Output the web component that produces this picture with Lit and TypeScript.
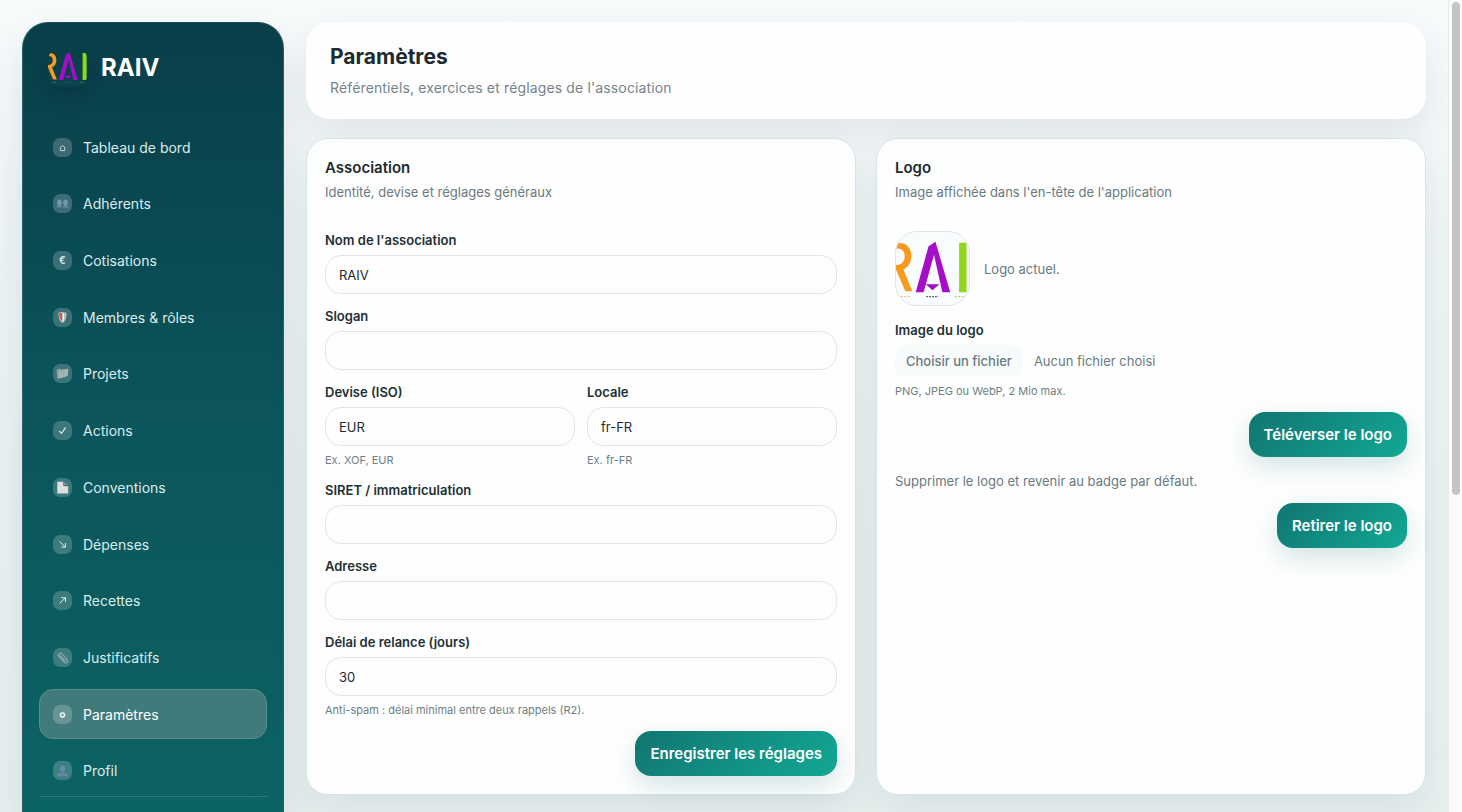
import { LitElement, html, css, svg } from "lit";
import { customElement, state } from "lit/decorators.js";
import { classMap } from "lit/directives/class-map.js";

interface NavItem {
  id: string;
  label: string;
}

const NAV: NavItem[] = [
  { id: "home", label: "Tableau de bord" },
  { id: "people", label: "Adhérents" },
  { id: "euro", label: "Cotisations" },
  { id: "shield", label: "Membres & rôles" },
  { id: "folder", label: "Projets" },
  { id: "check", label: "Actions" },
  { id: "page", label: "Conventions" },
  { id: "down", label: "Dépenses" },
  { id: "up", label: "Recettes" },
  { id: "clip", label: "Justificatifs" },
  { id: "gear", label: "Paramètres" },
  { id: "user", label: "Profil" },
];

const GLYPHS: Record<string, unknown> = {
  home: svg`<path d="M6.900 10 9.500 7.300l2.600 2.700M7.300 9.800v2.800h4.400V9.800" fill="none" stroke="#d3e0e2" stroke-width=".9"/>`,
  people: svg`<g fill="#7397b0"><ellipse cx="6.500" cy="8.500" rx="2.400" ry="3"/><ellipse cx="12.500" cy="8.500" rx="2.400" ry="3"/><path d="M3.500 13.600c0-2 1.300-2.600 3-2.600s2.800.6 2.800 2.600zM9.700 13.600c0-2 1.200-2.600 2.800-2.600s3 .6 3 2.600z" opacity=".7"/></g>`,
  shield: svg`<path d="M5.500 4.800 9.500 4v11C6.400 13.200 5.300 9.500 5.500 4.800z" fill="#d9d6d2"/><path d="M6 5.300 9.500 4.700v9.300C7 12 6 9 6 5.300z" fill="#cf5b4f"/><path d="M9.500 4l4 .8c.2 4.700-.9 8.400-4 10.200z" fill="#b9bfbd"/><path d="M9.500 4.900l1.500.3v7.500l-1.500 1.300z" fill="#f0eeea"/>`,
  folder: svg`<path d="M3.600 5.600l3.600-1 1 1 7.200-1.200-.8 7.400-8.300 2.800H4.200z" fill="#8fa3a6"/><path d="M5.700 7.200l9.700-1.800-.9 6.500-8.300 2.700z" fill="#a9b6b7"/><path d="M8.400 6.700l-.3 7.200M11 6.300l-.3 6.700" stroke="#8c9da0" stroke-width=".6"/>`,
  check: svg`<path d="M6.200 9.900l2.300 2.500 4.200-6" fill="none" stroke="#e4eeee" stroke-width="1.100"/>`,
  page: svg`<path d="M4.300 3.700h5.900v4.200h5v7.700H4.300z" fill="#dde0de"/><path d="M10.900 3.900l4 3.400h-4z" fill="#8e9a9a"/><path d="M11.200 7.700h3.500" stroke="#475c5e" stroke-width=".8"/>`,
  down: svg`<path d="M6.500 6.500l5.700 5.500M12.400 8v4.200H8.200" fill="none" stroke="#dce9e9" stroke-width="1"/>`,
  up: svg`<path d="M6.600 12.500l5.700-5.600M8.200 6.700h4.300v4.300" fill="none" stroke="#dce9e9" stroke-width="1"/>`,
  clip: svg`<path d="M4.200 6.500l6.900 7.600c1.900 2 4.700-.3 3-2.400L8.600 5.500C7.200 4 5.200 5.700 6.500 7.300l5.300 5.900" fill="none" stroke="#93a8ac" stroke-width="1.100"/><path d="M5 4.700l9.300 9.600" stroke="#7b949a" stroke-width=".8"/>`,
  gear: svg`<circle cx="9.500" cy="10" r="2" fill="none" stroke="#f3f8f7" stroke-width="1.300"/><circle cx="9.500" cy="10" r="2.900" fill="none" stroke="#d7e3e1" stroke-width=".5" stroke-dasharray="1 1.200"/>`,
  user: svg`<ellipse cx="9.500" cy="7.700" rx="2.500" ry="3.300" fill="#648ba6"/><path d="M3.900 15.300c0-3 2.300-3.900 5.600-3.900s5.600.9 5.600 3.900z" fill="#67859f"/>`,
};

/* Association mark: orange R cut by the left edge, purple A, green I. */
const mark = () => svg`
  <path d="M0 11.500C8 9.500 15.500 14 15.500 24c0 7-3 11.500-8 14L16.500 60H9.500L0 38v-4.500c5.500 0 8.800-3.700 8.800-9 0-5.500-3.800-8.500-8.800-7.500z" fill="#f79a1e"/>
  <path d="M20 61 33 14.500 40 10 55 61H47L38.500 23 28 61z" fill="#a60dc9"/>
  <path d="M30 53h14l-7 6z" fill="#9a12bd"/>
  <path d="M64 11h7.500v50H64z" fill="#8fd61c"/>
  <path d="M5 65.500h10.500" stroke="#e8b35c" stroke-width="1" stroke-dasharray="2 1.500"/>
  <path d="M30.500 65.500h12.500" stroke="#6b6475" stroke-width="1.100" stroke-dasharray="2 1"/>
  <path d="M59.500 65.500h10.500" stroke="#9ccc4a" stroke-width="1" stroke-dasharray="2 1.500"/>`;

@customElement("raiv-sidebar")
class RaivSidebar extends LitElement {
  @state() private current = "gear";

  static styles = css`
    :host {
      display: flex;
      flex-direction: column;
      box-sizing: border-box;
      padding: 23px 16px 0;
      border: 1px solid #2c6168;
      border-bottom: 0;
      border-top-color: #1d4c56;
      border-radius: 26px 26px 0 0;
      background: linear-gradient(180deg, #0a3e49 0%, #0b555b 50%, #0c6363 100%);
      box-shadow: 0 18px 40px rgba(20, 60, 70, 0.1);
      color: #dcecec;
    }
    .brand {
      display: flex;
      align-items: center;
      gap: 13px;
      padding: 0 9px;
      height: 42px;
      margin-bottom: 34px;
      color: #fff;
      font-size: 24px;
      font-weight: 700;
    }
    .logo {
      width: 40px;
      height: 40px;
      border-radius: 14px;
      box-shadow: 0 10px 20px rgba(0, 20, 30, 0.22);
    }
    nav {
      flex: 1;
      display: flex;
      flex-direction: column;
      justify-content: space-between;
    }
    .item {
      display: flex;
      align-items: center;
      gap: 11px;
      box-sizing: border-box;
      height: 50px;
      padding: 0 13px;
      border: 1px solid transparent;
      border-radius: 14px;
      color: inherit;
      font-size: 14px;
      text-decoration: none;
    }
    .active {
      background: #417a7a;
      border-color: #5c8e8c;
      color: #fff;
    }
    .icon {
      display: grid;
      place-items: center;
      width: 19px;
      height: 19px;
      border-radius: 7px;
      background: rgba(255, 255, 255, 0.2);
      font-size: 10px;
      font-weight: 600;
    }
    .foot {
      height: 15px;
      border-top: 1px solid #2f7a79;
    }
  `;

  render() {
    return html`
      <div class="brand">
        <svg class="logo" viewBox="0 0 74 74" aria-hidden="true">${mark()}</svg>
        <span>RAIV</span>
      </div>
      <nav aria-label="Navigation">
        ${NAV.map(
          (n) => html`<a
            class=${classMap({ item: true, active: n.id === this.current })}
            href="#${n.id}"
            @click=${() => (this.current = n.id)}
          >
            <span class="icon" aria-hidden="true"
              >${n.id === "euro"
                ? "€"
                : html`<svg width="19" height="19" viewBox="0 0 19 19">${GLYPHS[n.id]}</svg>`}</span
            >
            <span>${n.label}</span>
          </a>`
        )}
      </nav>
      <div class="foot"></div>
    `;
  }
}

@customElement("app-root")
class AppRoot extends LitElement {
  @state() private fileName = "";

  static styles = css`
    :host {
      display: grid;
      grid-template-columns: minmax(0, 1fr) 14px;
      height: 100vh;
      overflow: hidden;
      background: linear-gradient(180deg, #f8fbfc 0%, #f0f5f6 25%, #eaf1f1 60%, #e8f0ef 100%);
      color: #1d2a2e;
      font-family: Inter, "Liberation Sans", sans-serif;
      font-size: 13px;
    }
    .shell {
      display: grid;
      grid-template-columns: 262px minmax(0, 1fr);
      gap: 22px;
      padding: 22px 22px 0;
      min-height: 0;
    }
    main {
      display: flex;
      flex-direction: column;
      gap: 19px;
      min-width: 0;
      padding-bottom: 17px;
    }
    .top {
      padding: 20px 24px;
      border-radius: 24px;
      background: #fefefe;
      box-shadow: 0 14px 36px rgba(20, 60, 75, 0.09);
    }
    h1 {
      margin: 0 0 5px;
      font-size: 21px;
      line-height: 30px;
      font-weight: 700;
    }
    .lead {
      margin: 0;
      font-size: 14px;
      line-height: 22px;
      letter-spacing: 0.01em;
      color: #74848a;
    }
    .cards {
      flex: 1;
      display: grid;
      grid-template-columns: repeat(2, minmax(0, 1fr));
      gap: 20px;
    }
    .card {
      box-sizing: border-box;
      padding: 18px;
      border: 1px solid #d9e3e7;
      border-radius: 22px;
      background: linear-gradient(180deg, #fcfdfd, #fefefe 60px);
      box-shadow: 0 14px 36px rgba(20, 70, 75, 0.08);
    }
    h2 {
      margin: 0 0 4px;
      font-size: 15px;
      line-height: 22px;
      font-weight: 600;
    }
    .muted {
      margin: 0;
      line-height: 18px;
      color: #6a7a80;
    }
    .intro {
      margin-bottom: 30px;
    }
    form {
      display: flex;
      flex-direction: column;
      gap: 13px;
    }
    .pair {
      display: grid;
      grid-template-columns: repeat(2, minmax(0, 1fr));
      gap: 12px;
    }
    .field {
      display: flex;
      flex-direction: column;
    }
    .name {
      margin-bottom: 6px;
      line-height: 18px;
      font-weight: 600;
      color: #223034;
    }
    .text {
      box-sizing: border-box;
      width: 100%;
      height: 39px;
      padding: 0 13px;
      border: 1px solid #dfe6ea;
      border-radius: 16px;
      background: #fefefe;
      color: #1d2a2e;
      font: inherit;
    }
    .hint {
      margin-top: 6px;
      font-size: 11px;
      line-height: 16px;
      color: #6f7e84;
    }
    button {
      align-self: flex-end;
      height: 45px;
      padding: 0 15px;
      border: 0;
      border-radius: 16px;
      background: linear-gradient(135deg, #117571, #12a894);
      box-shadow: 0 10px 24px rgba(15, 118, 110, 0.18);
      color: #fff;
      font: 600 15px Inter, "Liberation Sans", sans-serif;
    }
    .preview {
      display: flex;
      align-items: center;
      gap: 14px;
      margin-bottom: 2px;
    }
    .picture {
      box-sizing: border-box;
      width: 75px;
      height: 75px;
      overflow: hidden;
      border: 1px solid #dde5e9;
      border-radius: 22px;
      background: #f9fcfd;
    }
    .picture svg {
      display: block;
    }
    .file {
      display: flex;
      align-items: center;
      gap: 11px;
      color: #6a7a80;
    }
    .pick {
      padding: 0 11px;
      border-radius: 10px;
      background: #f8fbfc;
      line-height: 32px;
      font-weight: 500;
    }
    .native {
      position: absolute;
      width: 1px;
      height: 1px;
      opacity: 0;
    }
    .remove {
      margin-top: 15px;
    }
    .track {
      box-sizing: border-box;
      padding: 2px 2px 2px 3px;
      border-left: 1px solid #e6eaeb;
      background: #fbfbfb;
    }
    .thumb {
      height: 61%;
      border-radius: 4px;
      background: #c5c5c5;
    }
  `;

  private field(id: string, label: string, value = "", hint = "") {
    return html`<div class="field">
      <label class="name" for=${id}>${label}</label>
      <input class="text" id=${id} .value=${value} />
      ${hint ? html`<span class="hint">${hint}</span>` : null}
    </div>`;
  }

  private onFile(e: Event) {
    this.fileName = (e.target as HTMLInputElement).files?.[0]?.name ?? "";
  }

  private stop(e: Event) {
    e.preventDefault();
  }

  render() {
    return html`
      <div class="shell">
        <raiv-sidebar></raiv-sidebar>
        <main>
          <header class="top">
            <h1>Paramètres</h1>
            <p class="lead">Référentiels, exercices et réglages de l'association</p>
          </header>
          <div class="cards">
            <section class="card">
              <h2>Association</h2>
              <p class="muted intro">Identité, devise et réglages généraux</p>
              <form @submit=${this.stop}>
                ${this.field("nom", "Nom de l'association", "RAIV")}
                ${this.field("slogan", "Slogan")}
                <div class="pair">
                  ${this.field("devise", "Devise (ISO)", "EUR", "Ex. XOF, EUR")}
                  ${this.field("locale", "Locale", "fr-FR", "Ex. fr-FR")}
                </div>
                ${this.field("siret", "SIRET / immatriculation")}
                ${this.field("adresse", "Adresse")}
                ${this.field("delai", "Délai de relance (jours)", "30", "Anti-spam : délai minimal entre deux rappels (R2).")}
                <button type="submit">Enregistrer les réglages</button>
              </form>
            </section>
            <section class="card">
              <h2>Logo</h2>
              <p class="muted intro">Image affichée dans l'en-tête de l'application</p>
              <form @submit=${this.stop}>
                <div class="preview">
                  <div class="picture">
                    <svg width="73" height="73" viewBox="0 0 74 74" role="img" aria-label="RAIV">${mark()}</svg>
                  </div>
                  <span class="muted">Logo actuel.</span>
                </div>
                <div class="field">
                  <label class="name" for="logo">Image du logo</label>
                  <div class="file">
                    <label class="pick" for="logo">Choisir un fichier</label>
                    <span>${this.fileName || "Aucun fichier choisi"}</span>
                    <input class="native" id="logo" type="file" accept="image/*" @change=${this.onFile} />
                  </div>
                  <span class="hint">PNG, JPEG ou WebP, 2 Mio max.</span>
                </div>
                <button type="submit">Téléverser le logo</button>
              </form>
              <form class="remove" @submit=${this.stop}>
                <p class="muted">Supprimer le logo et revenir au badge par défaut.</p>
                <button type="submit">Retirer le logo</button>
              </form>
            </section>
          </div>
        </main>
      </div>
      <div class="track"><div class="thumb"></div></div>
    `;
  }
}
